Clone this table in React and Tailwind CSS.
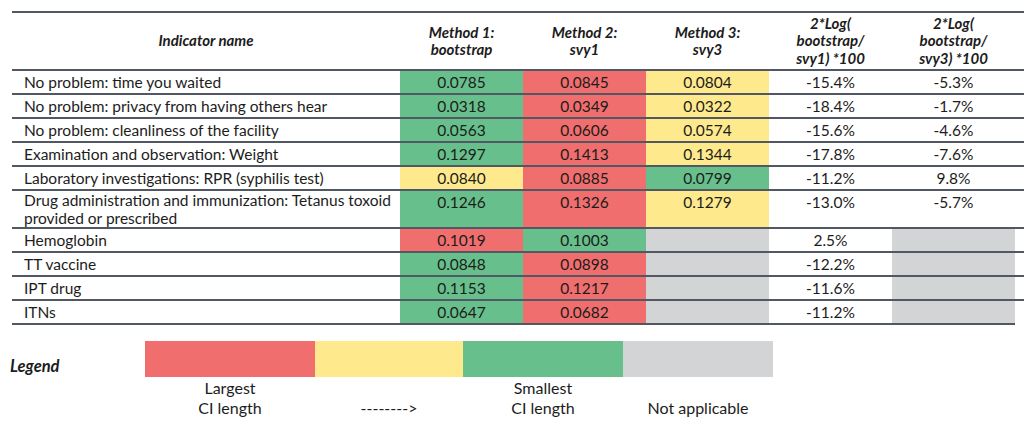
import React from 'react';

const GREEN = 'bg-[#67c08b]';
const RED = 'bg-[#f06e6e]';
const YELLOW = 'bg-[#fee98c]';
const GREY = 'bg-[#d3d4d6]';

const rows = [
    { name: 'No problem: time you waited', vals: [['0.0785', GREEN], ['0.0845', RED], ['0.0804', YELLOW]], l1: '-15.4%', l3: '-5.3%' },
    { name: 'No problem: privacy from having others hear', vals: [['0.0318', GREEN], ['0.0349', RED], ['0.0322', YELLOW]], l1: '-18.4%', l3: '-1.7%' },
    { name: 'No problem: cleanliness of the facility', vals: [['0.0563', GREEN], ['0.0606', RED], ['0.0574', YELLOW]], l1: '-15.6%', l3: '-4.6%' },
    { name: 'Examination and observation: Weight', vals: [['0.1297', GREEN], ['0.1413', RED], ['0.1344', YELLOW]], l1: '-17.8%', l3: '-7.6%' },
    { name: 'Laboratory investigations: RPR (syphilis test)', vals: [['0.0840', YELLOW], ['0.0885', RED], ['0.0799', GREEN]], l1: '-11.2%', l3: '9.8%' },
    { name: 'Drug administration and immunization: Tetanus toxoid provided or prescribed', tall: true, vals: [['0.1246', GREEN], ['0.1326', RED], ['0.1279', YELLOW]], l1: '-13.0%', l3: '-5.7%' },
    { name: 'Hemoglobin', vals: [['0.1019', RED], ['0.1003', GREEN], ['', GREY]], l1: '2.5%', l3: null },
    { name: 'TT vaccine', vals: [['0.0848', GREEN], ['0.0898', RED], ['', GREY]], l1: '-12.2%', l3: null },
    { name: 'IPT drug', vals: [['0.1153', GREEN], ['0.1217', RED], ['', GREY]], l1: '-11.6%', l3: null },
    { name: 'ITNs', vals: [['0.0647', GREEN], ['0.0682', RED], ['', GREY]], l1: '-11.2%', l3: null },
];

const headers = [
    ['Method 1:', 'bootstrap'],
    ['Method 2:', 'svy1'],
    ['Method 3:', 'svy3'],
    ['2*Log(', 'bootstrap/', 'svy1) *100'],
    ['2*Log(', 'bootstrap/', 'svy3) *100'],
];

const gridCols = 'grid grid-cols-[388px_123px_123px_123px_123px_123px]';

const App = () => {
    return (
        <div className="w-[1024px] h-[424px] bg-white text-[#1c1c1c] overflow-hidden" style={{ fontFamily: 'Lato, "DejaVu Sans", sans-serif' }}>
            {/* Table */}
            <div className="pl-[12px] pt-[11px]">
                <div className={`${gridCols} border-t-2 border-[#525764] h-[58px] font-bold italic text-[15px] leading-[17.5px]`}>
                    <div className="flex items-center justify-center">Indicator name</div>
                    {headers.map((lines, i) => (
                        <div key={i} className="flex flex-col items-center justify-center">
                            {lines.map((l) => <span key={l}>{l}</span>)}
                        </div>
                    ))}
                </div>
                {rows.map((r) => (
                    <div key={r.name} className={`${gridCols} border-t-2 border-[#525764] text-[15.5px] ${r.tall ? 'h-[38px]' : 'h-[24px]'}`}>
                        <div className={`pl-[12px] whitespace-nowrap ${r.tall ? 'leading-[18px]' : 'leading-[22px]'}`}>
                            {r.tall ? <>Drug administration and immunization: Tetanus toxoid<br />provided or prescribed</> : r.name}
                        </div>
                        {r.vals.map(([v, c], i) => (
                            <div key={i} className={`${c} text-center leading-[22px]`}>{v}</div>
                        ))}
                        <div className="text-center leading-[22px]">{r.l1}</div>
                        {r.l3 === null
                            ? <div className={GREY}></div>
                            : <div className="text-center leading-[22px]">{r.l3}</div>}
                    </div>
                ))}
                <div className="w-[1003px] border-t-2 border-[#525764]"></div>
            </div>

            {/* Legend */}
            <div className="flex mt-[16px]">
                <div className="w-[145px] pl-[10px] pt-[15px] font-bold italic text-[16.5px] leading-[20px]">Legend</div>
                <div className="grid grid-cols-[170px_148px_160px_150px] text-[16px] leading-[20px] text-center">
                    <div className={`${RED} h-[36px]`}></div>
                    <div className={`${YELLOW} h-[36px]`}></div>
                    <div className={`${GREEN} h-[36px]`}></div>
                    <div className={`${GREY} h-[36px]`}></div>
                    <div className="pt-[1px]">Largest<br />CI length</div>
                    <div className="pt-[1px]"><br />--------&gt;</div>
                    <div className="pt-[1px]">Smallest<br />CI length</div>
                    <div className="pt-[1px]"><br />Not applicable</div>
                </div>
            </div>
        </div>
    );
};

export default App;
